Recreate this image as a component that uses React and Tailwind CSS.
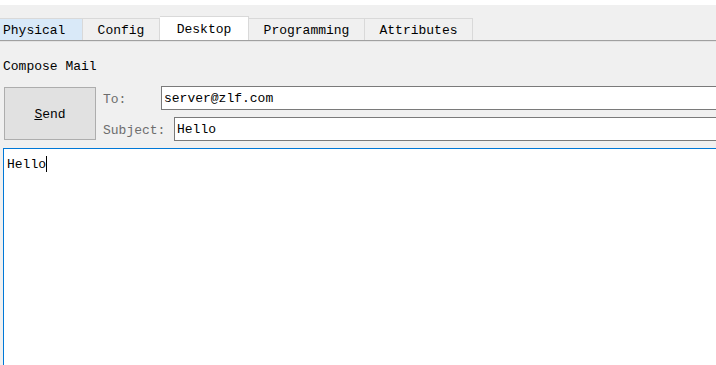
import React from 'react';

const tabs = [
  { label: 'Physical', w: 'w-[83px]', cls: 'bg-[#d9e9f8] justify-start pl-[3px] h-[22px]' },
  { label: 'Config', w: 'w-[77px]', cls: 'bg-[#f0f0f0] justify-center h-[22px]' },
  { label: 'Desktop', w: 'w-[89px]', cls: 'bg-white justify-center h-[24px]' },
  { label: 'Programming', w: 'w-[116px]', cls: 'bg-[#f0f0f0] justify-center h-[22px]' },
  { label: 'Attributes', w: 'w-[108px]', cls: 'bg-[#f0f0f0] justify-center h-[22px]' },
];

export default function App() {
  return (
    <div className="w-[716px] h-[365px] overflow-hidden bg-[#f0f0f0] text-[13px] text-black font-['Liberation_Mono',monospace] flex flex-col">
      <div className="h-[5px] bg-white shrink-0" />

      {/* Tabs */}
      <div className="mt-[11px] flex items-end h-[24px] shrink-0">
        {tabs.map((t) => (
          <div
            key={t.label}
            className={`${t.w} ${t.cls} shrink-0 flex items-center border-t border-r border-[#d9d9d9] leading-none pt-[2px]`}
          >
            {t.label}
          </div>
        ))}
      </div>
      <div className="h-px bg-[#a0a0a0] shrink-0" />
      <div className="h-px bg-[#e3e3e3] shrink-0" />

      {/* Compose */}
      <div className="pl-[3px] mt-[17px] leading-[15px] shrink-0">Compose Mail</div>

      <div className="flex mt-[12px] shrink-0">
        <button className="ml-[4px] mt-px w-[92px] h-[53px] shrink-0 bg-[#e1e1e1] border border-[#adadad] flex items-center justify-center pt-[2px] font-['Liberation_Mono',monospace] text-[13px]">
          <span><span className="underline">S</span>end</span>
        </button>
        <div className="ml-[7px] flex flex-col gap-[7px] shrink-0">
          <div className="flex items-center h-[24px]">
            <span className="w-[58px] shrink-0 pt-[3px] text-[#6d6d6d]">To:</span>
            <div className="w-[700px] h-[24px] bg-white border border-[#7a7a7a] flex items-center pl-[2px] pt-[2px] shrink-0">
              server@zlf.com
            </div>
          </div>
          <div className="flex items-center h-[24px]">
            <span className="w-[71px] shrink-0 pt-[3px] text-[#6d6d6d]">Subject:</span>
            <div className="w-[700px] h-[24px] bg-white border border-[#7a7a7a] flex items-center pl-[2px] pt-[2px] shrink-0">
              Hello
            </div>
          </div>
        </div>
      </div>

      {/* Body */}
      <div className="ml-[3px] mt-[7px] w-[720px] h-[240px] shrink-0 bg-white border border-[#0078d7] pt-[7px] pl-[3px]">
        <div className="flex items-center h-[16px]">
          <span className="pt-[1px]">Hello</span>
          <span className="w-px h-[16px] bg-black" />
        </div>
      </div>
    </div>
  );
}
